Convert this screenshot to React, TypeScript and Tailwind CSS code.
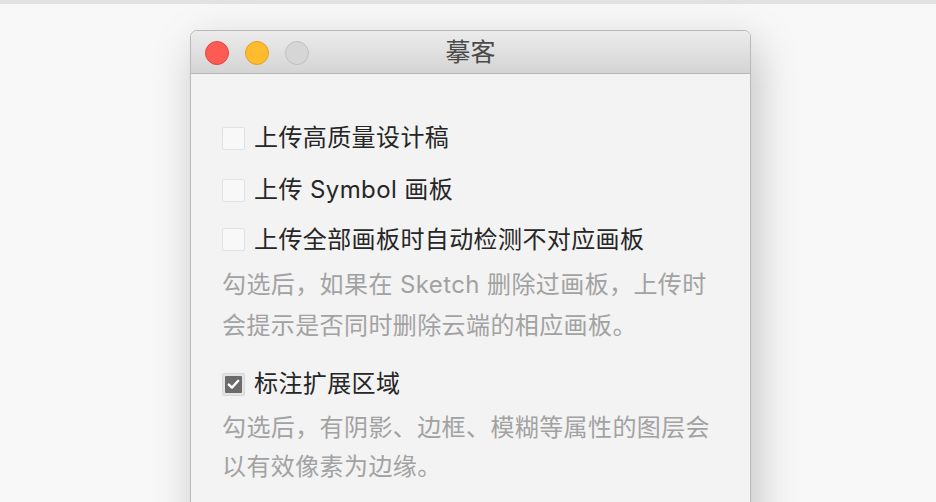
import React from "react";

const font = { fontFamily: "Inter, 'Noto Sans CJK SC', sans-serif" };

function Box({ checked }: { checked?: boolean }) {
  if (checked) {
    return (
      <div className="w-[23px] h-[23px] shrink-0 rounded-[2px] border border-[#d8d8d8] bg-[#e4e4e4] p-[2px]">
        <div className="w-full h-full bg-[#6b6b6b] flex items-center justify-center rounded-[1px]">
          <svg width="13" height="11" viewBox="0 0 13 11">
            <path d="M1.8 5.6 L5 8.6 L11.2 1.8" fill="none" stroke="#fff" strokeWidth="2.4" strokeLinecap="round" strokeLinejoin="round" />
          </svg>
        </div>
      </div>
    );
  }
  return <div className="w-[23px] h-[23px] shrink-0 rounded-[2px] border border-[#e2e2e2] bg-[#f8f8f8]" />;
}

function Row({ label, checked }: { label: string; checked?: boolean }) {
  return (
    <div className="h-[52px] flex items-center gap-[9px]">
      <Box checked={checked} />
      <span className="text-[24px] tracking-[0.4px] leading-[52px] text-[#262626] whitespace-nowrap">{label}</span>
    </div>
  );
}

export default function App() {
  return (
    <div className="w-[936px] h-[502px] overflow-hidden bg-[#f8f8f8] relative" style={font}>
      <div className="h-[4px] bg-[#e2e2e2]" />
      <div className="ml-[190px] mt-[26px] w-[561px] h-[520px] rounded-t-[7px] border border-[#b9b9b9] bg-[#f3f3f3] shadow-[6px_14px_44px_rgba(0,0,0,0.22)] overflow-hidden">
        <div className="h-[43px] relative flex items-center justify-center bg-gradient-to-b from-[#ececec] to-[#d4d4d4] border-b border-[#b7b7b7]">
          <div className="absolute left-[14px] top-[10px] flex gap-[16px]">
            <div className="w-[24px] h-[24px] rounded-full bg-[#fd5b54] border border-[#e2463f]" />
            <div className="w-[24px] h-[24px] rounded-full bg-[#febb2d] border border-[#e0a125]" />
            <div className="w-[24px] h-[24px] rounded-full bg-[#d6d6d6] border border-[#c1c1c1]" />
          </div>
          <span className="text-[25px] text-[#4a4a4a] leading-none mt-[1px]">摹客</span>
        </div>
        <div className="pl-[31px] pt-[38px]">
          <Row label="上传高质量设计稿" />
          <Row label="上传 Symbol 画板" />
          <div className="h-[49px] flex items-center gap-[9px] -mt-[1px]">
            <Box />
            <span className="text-[24px] tracking-[0.4px] text-[#262626] whitespace-nowrap">上传全部画板时自动检测不对应画板</span>
          </div>
          <div className="text-[24px] tracking-[0.4px] leading-[41px] text-[#a2a2a2] whitespace-nowrap">
            勾选后，如果在 Sketch 删除过画板，上传时
            <br />
            会提示是否同时删除云端的相应画板。
          </div>
          <div className="mt-[12px]">
            <Row label="标注扩展区域" checked />
          </div>
          <div className="-mt-[2px] text-[24px] tracking-[0.4px] leading-[39px] text-[#a2a2a2] whitespace-nowrap">
            勾选后，有阴影、边框、模糊等属性的图层会
            <br />
            以有效像素为边缘。
          </div>
        </div>
      </div>
    </div>
  );
}
